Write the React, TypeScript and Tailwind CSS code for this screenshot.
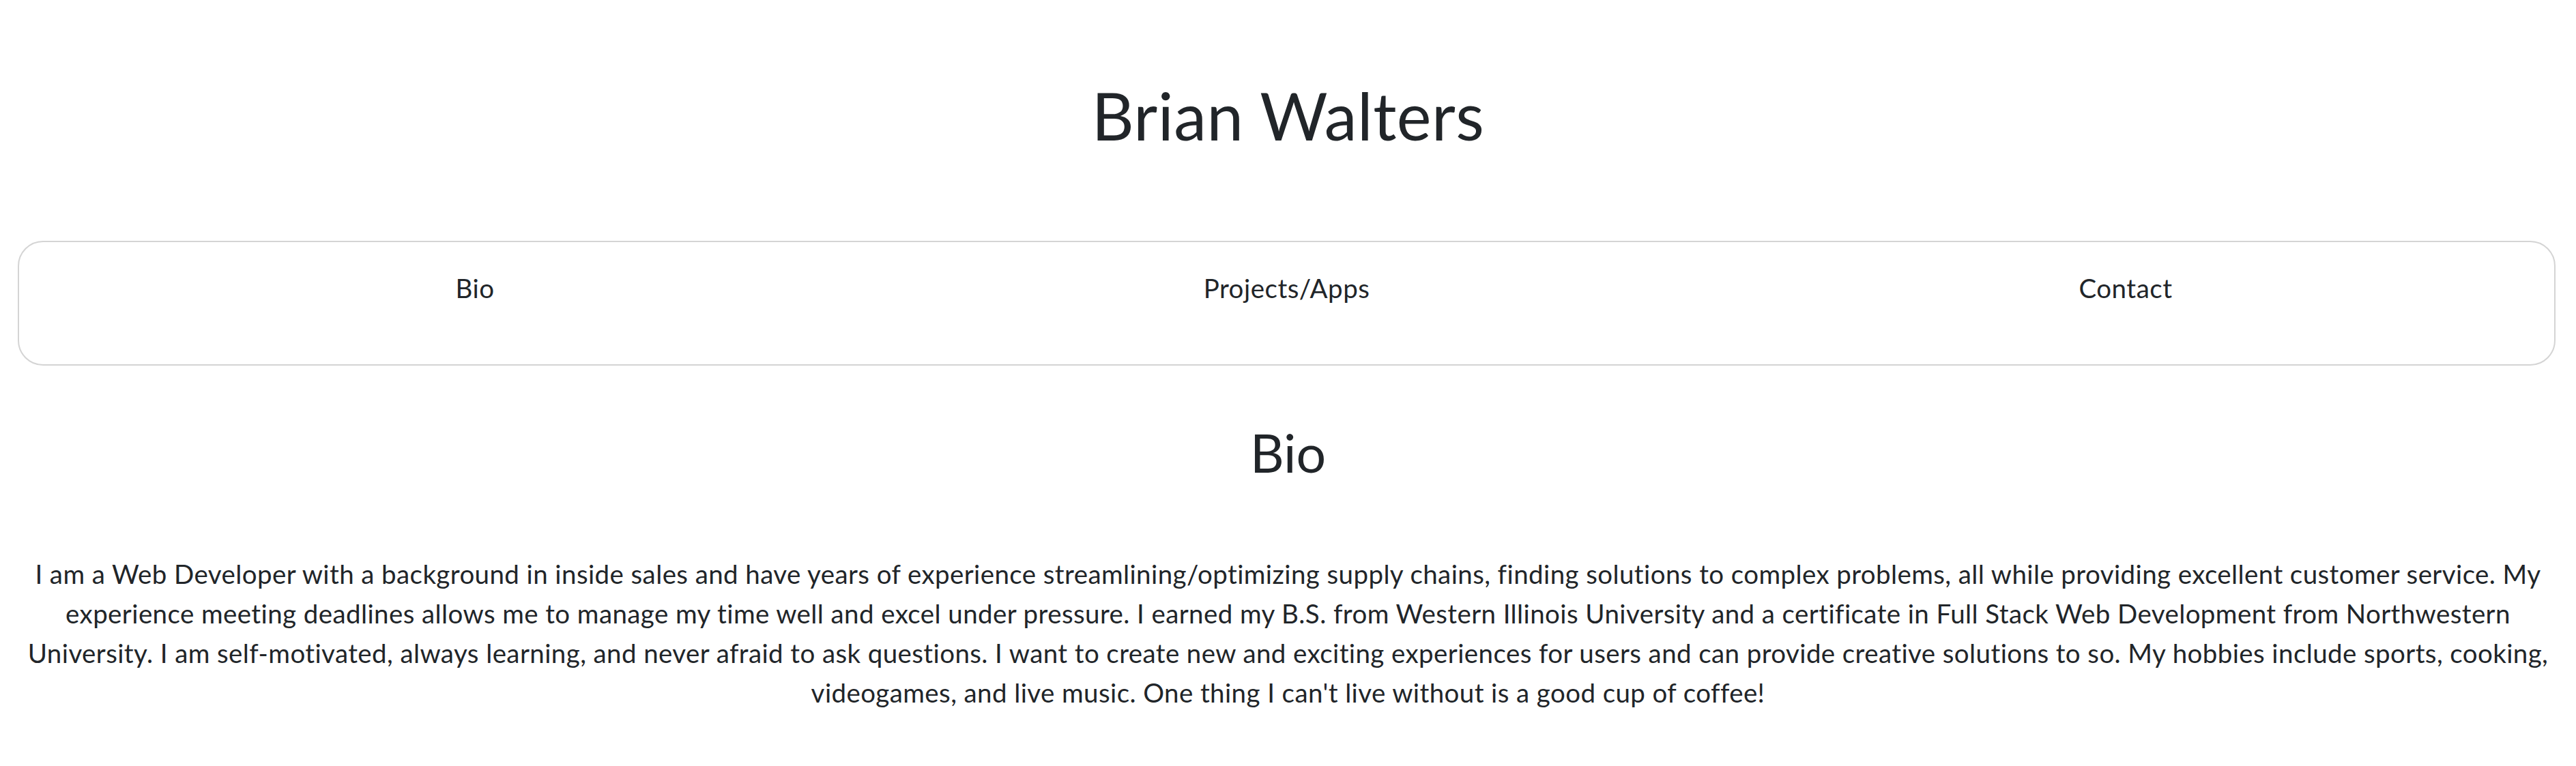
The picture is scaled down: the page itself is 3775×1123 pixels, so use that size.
const links = ["Bio", "Projects/Apps", "Contact"];

export default function App() {
  return (
    <main className="min-h-screen bg-white text-[#212529] font-['Lato',sans-serif]">
      <header className="pt-[111px] text-center">
        <h1 className="text-[96px] leading-[1.2] font-normal tracking-[0.5px]">Brian Walters</h1>
      </header>

      <nav className="mt-[127px] ml-[26px] mr-[30px] rounded-[37px] border-2 border-[#d4d4d4] pl-[43px] pr-[40px] pt-[39px] pb-[82px]">
        <ul className="flex pl-[77px]">
          {links.map((link) => (
            <li key={link} className="flex-auto text-center">
              <a href="#" className="text-[38.5px] leading-[1.5] tracking-[0.5px] text-[#212529]">
                {link}
              </a>
            </li>
          ))}
        </ul>
      </nav>

      <section className="mt-[81px] px-[29px] text-center">
        <h2 className="text-[77px] leading-[1.2] font-normal">Bio</h2>
        <p className="mt-[104px] text-[38.5px] leading-[1.5] tracking-[0.4px]">
          I am a Web Developer with a background in inside sales and have years of experience
          streamlining/optimizing supply chains, finding solutions to complex problems, all while
          providing excellent customer service. My experience meeting deadlines allows me to manage
          my time well and excel under pressure. I earned my B.S. from Western Illinois University
          and a certificate in Full Stack Web Development from Northwestern University. I am
          self-motivated, always learning, and never afraid to ask questions. I want to create new
          and exciting experiences for users and can provide creative solutions to so. My hobbies
          include sports, cooking, videogames, and live music. One thing I can't live without is a
          good cup of coffee!
        </p>
      </section>
    </main>
  );
}
